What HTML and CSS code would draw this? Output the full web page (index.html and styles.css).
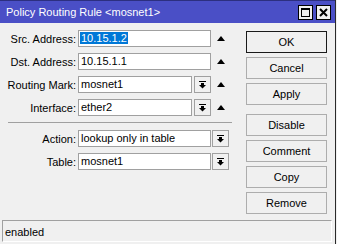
FILE: index.html
```html
<!DOCTYPE html>
<html lang="en">
<head>
  <meta charset="UTF-8">
  <title>Policy Routing Rule &lt;mosnet1&gt;</title>
  <link rel="stylesheet" href="styles.css">
</head>
<body>
  <div class="window">
    <div class="titlebar">
      <span class="title">Policy Routing Rule &lt;mosnet1&gt;</span>
      <div class="title-buttons">
        <div class="tbtn">
          <svg width="9" height="9" viewBox="0 0 9 9"><rect x="0.5" y="0.5" width="8" height="8" fill="none" stroke="#000"/><rect x="0" y="0" width="9" height="2" fill="#000"/></svg>
        </div>
        <div class="tbtn">
          <svg width="9" height="9" viewBox="0 0 9 9"><path d="M1 1 L8 8 M8 1 L1 8" stroke="#000" stroke-width="2"/></svg>
        </div>
      </div>
    </div>

    <div class="content">
      <div class="form">
        <div class="row">
          <label>Src. Address:</label>
          <div class="field wide"><span class="selected">10.15.1.2</span></div>
          <span class="up"></span>
        </div>
        <div class="row">
          <label>Dst. Address:</label>
          <div class="field wide">10.15.1.1</div>
          <span class="up"></span>
        </div>
        <div class="row">
          <label>Routing Mark:</label>
          <div class="field short">mosnet1</div>
          <div class="drop">
            <svg width="7" height="8" viewBox="0 0 7 8"><rect x="0" y="0" width="7" height="1"/><rect x="2" y="2" width="3" height="2"/><polygon points="0,4 7,4 3.5,7.5"/></svg>
          </div>
          <span class="up"></span>
        </div>
        <div class="row">
          <label>Interface:</label>
          <div class="field short">ether2</div>
          <div class="drop">
            <svg width="7" height="8" viewBox="0 0 7 8"><rect x="0" y="0" width="7" height="1"/><rect x="2" y="2" width="3" height="2"/><polygon points="0,4 7,4 3.5,7.5"/></svg>
          </div>
          <span class="up"></span>
        </div>

        <div class="separator"></div>

        <div class="row">
          <label>Action:</label>
          <div class="field wide">lookup only in table</div>
          <div class="drop">
            <svg width="7" height="8" viewBox="0 0 7 8"><rect x="0" y="0" width="7" height="1"/><rect x="2" y="2" width="3" height="2"/><polygon points="0,4 7,4 3.5,7.5"/></svg>
          </div>
        </div>
        <div class="row">
          <label>Table:</label>
          <div class="field wide">mosnet1</div>
          <div class="drop">
            <svg width="7" height="8" viewBox="0 0 7 8"><rect x="0" y="0" width="7" height="1"/><rect x="2" y="2" width="3" height="2"/><polygon points="0,4 7,4 3.5,7.5"/></svg>
          </div>
        </div>
      </div>

      <div class="buttons">
        <button class="default">OK</button>
        <button>Cancel</button>
        <button>Apply</button>
        <button class="spaced">Disable</button>
        <button>Comment</button>
        <button>Copy</button>
        <button>Remove</button>
      </div>
    </div>

    <div class="statusbar">enabled</div>
  </div>
</body>
</html>
```

FILE: styles.css
```css
body {
  margin: 0;
  padding: 0;
  background-color: #f0f0f0;
  font-family: "Liberation Sans", Arial, sans-serif;
  font-size: 11px;
  color: #000;
}
.window {
  width: 335px;
  height: 244px;
  background-color: #f0f0f0;
  border-right: 1px solid #2a2a2a;
  display: flex;
  flex-direction: column;
}
.titlebar {
  height: 23px;
  background-color: #4a4fc6;
  color: #fff;
  display: flex;
  align-items: center;
  justify-content: space-between;
  padding: 0 4px 0 6px;
  border-top: 1px solid #2c2f80;
  box-sizing: border-box;
}
.title {
  font-size: 11px;
}
.title-buttons {
  display: flex;
  gap: 3px;
}
.tbtn {
  width: 13px;
  height: 13px;
  background-color: #f0f0f0;
  border: 1px solid #000;
  display: flex;
  align-items: center;
  justify-content: center;
}
.content {
  display: flex;
  padding-top: 7px;
  height: 190px;
}
.form {
  width: 240px;
}
.row {
  display: flex;
  align-items: center;
  height: 17px;
  margin-bottom: 6px;
}
.row label {
  width: 78px;
  text-align: right;
  padding-right: 2px;
  box-sizing: border-box;
}
.field {
  height: 17px;
  box-sizing: border-box;
  background-color: #fff;
  border: 1px solid #a0a0a0;
  padding: 0 2px;
  line-height: 15px;
  white-space: nowrap;
  overflow: hidden;
}
.wide {
  width: 133px;
}
.short {
  width: 114px;
  margin-right: 1px;
}
.selected {
  background-color: #0078d7;
  color: #fff;
  padding: 0 1px;
  margin-left: -1px;
}
.drop {
  width: 17px;
  height: 17px;
  box-sizing: border-box;
  border: 1px solid #a0a0a0;
  background-color: #f0f0f0;
  display: flex;
  align-items: center;
  justify-content: center;
  margin-left: 1px;
}
.up {
  width: 0;
  height: 0;
  border-left: 4px solid transparent;
  border-right: 4px solid transparent;
  border-bottom: 5px solid #000;
  margin-left: 6px;
  margin-top: -1px;
}
.separator {
  height: 1px;
  background-color: #a0a0a0;
  margin: 2px 0 7px 8px;
  width: 224px;
}
.buttons {
  display: flex;
  flex-direction: column;
  gap: 4px;
  padding-top: 1px;
  margin-left: 6px;
}
.buttons button {
  width: 81px;
  height: 22px;
  font-family: "Liberation Sans", Arial, sans-serif;
  font-size: 11px;
  background-color: #f0f0f0;
  border: 1px solid #adadad;
  padding: 0;
  color: #000;
}
.buttons .default {
  border-color: #1a1a1a;
}
.buttons .spaced {
  margin-top: 5px;
}
.statusbar {
  margin: 0 3px 2px 2px;
  height: 22px;
  border-top: 1px solid #a0a0a0;
  border-left: 1px solid #a0a0a0;
  border-right: 1px solid #ffffff;
  border-bottom: 1px solid #ffffff;
  line-height: 22px;
  padding-left: 2px;
  box-sizing: border-box;
  margin-top: auto;
}
```
